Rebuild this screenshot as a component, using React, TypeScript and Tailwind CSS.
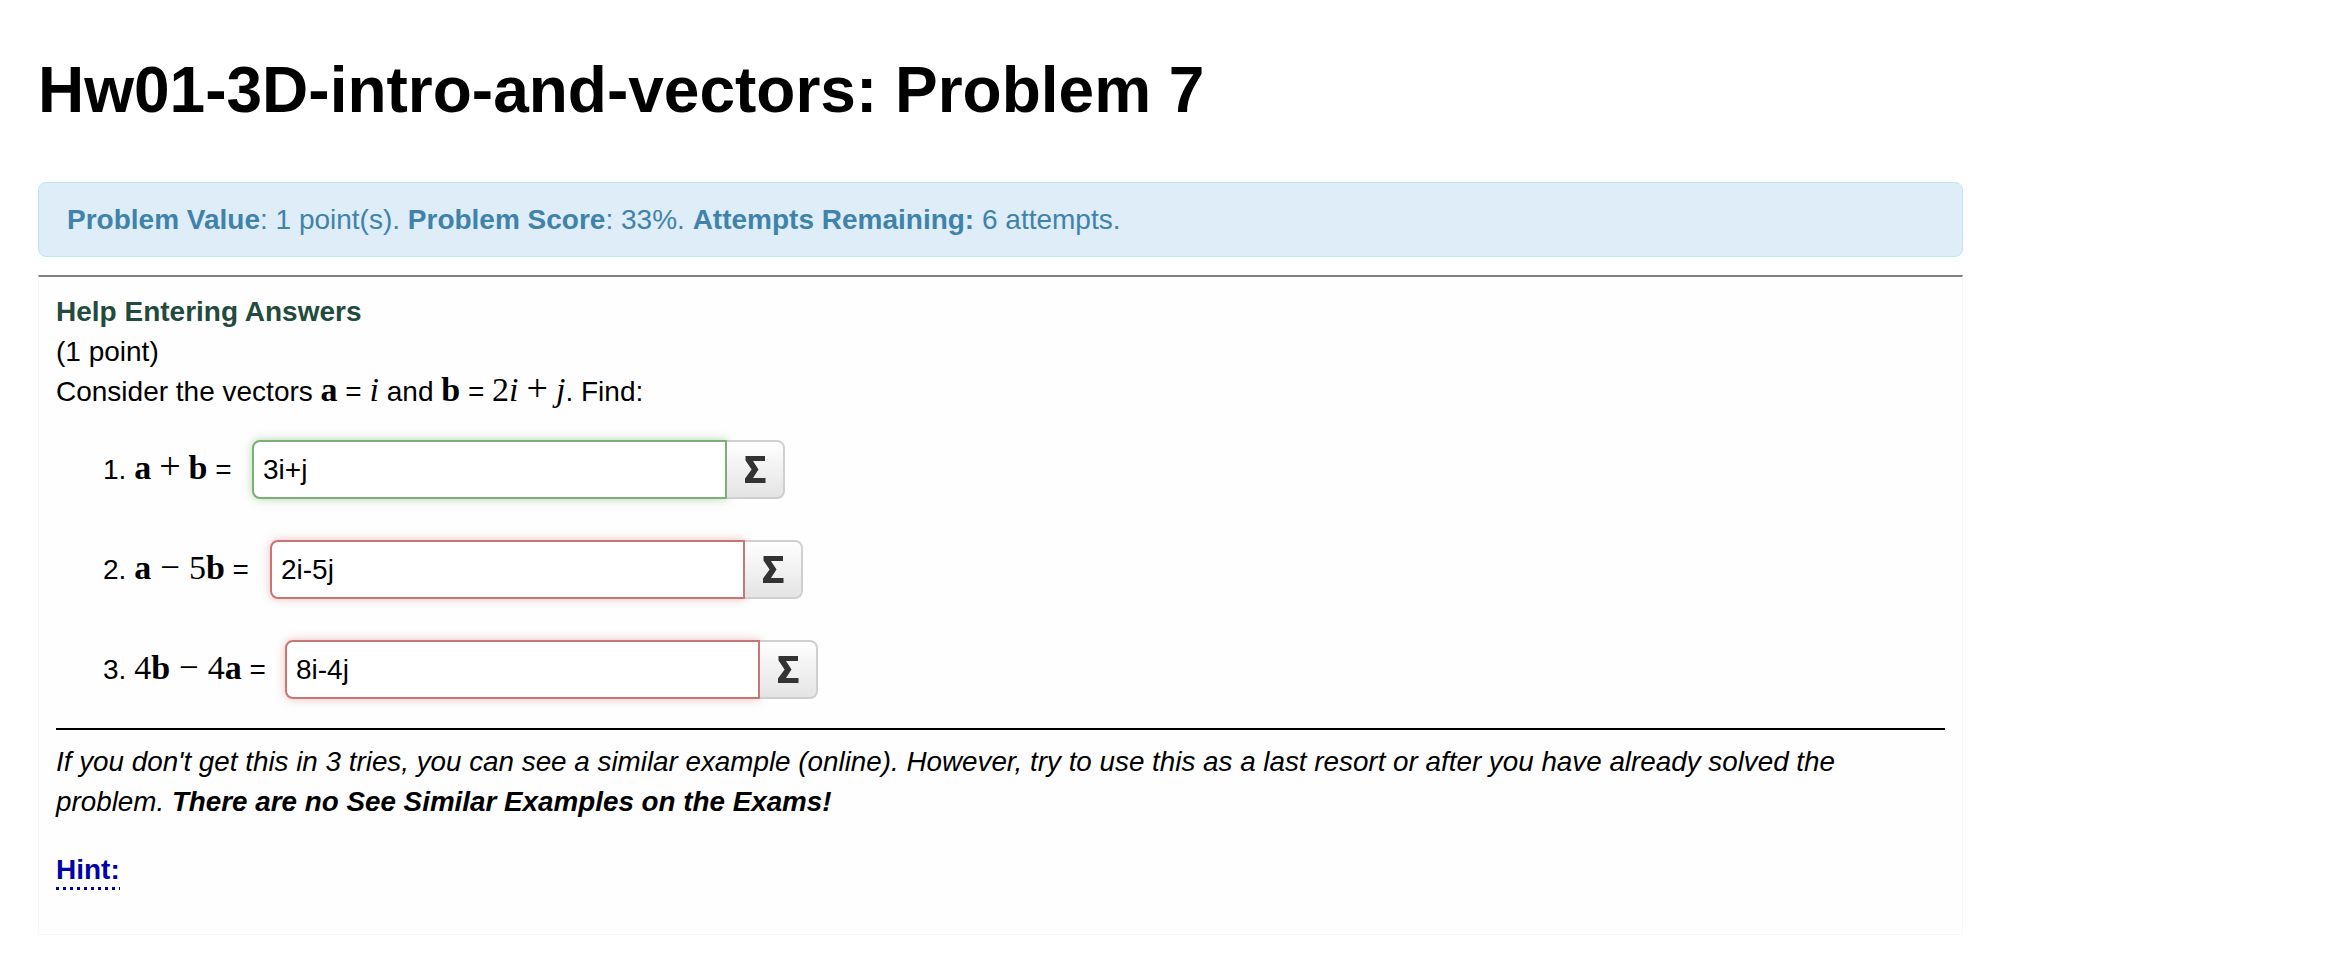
import React from "react";

const Sigma = () => (
  <svg width="21" height="27" viewBox="0 0 21 27" aria-hidden="true">
    <polygon
      points="0.5,0 20,0 20,5 8,5 13.5,13.5 8,22 20.5,22 20.5,27 0,27 0,22.6 6.6,13.5 0.5,4.4"
      fill="#333333"
    />
  </svg>
);

type RowProps = {
  num: string;
  labelWidth: string;
  math: React.ReactNode;
  value: string;
  ok: boolean;
};

const B = ({ children }: { children: React.ReactNode }) => (
  <span className="font-['Liberation_Serif',serif] font-bold text-[34px] leading-[20px]">{children}</span>
);
const N = ({ children }: { children: React.ReactNode }) => (
  <span className="font-['Liberation_Serif',serif] text-[34px] leading-[20px]">{children}</span>
);
const I = ({ children }: { children: React.ReactNode }) => (
  <span className="font-['Liberation_Serif',serif] italic text-[34px] leading-[20px]">{children}</span>
);
const Op = ({ children }: { children: React.ReactNode }) => (
  <span className="mx-[8px] font-['Liberation_Serif',serif] text-[38px] leading-[20px]">{children}</span>
);
const Minus = () => (
  <span className="mx-[9px] font-['Liberation_Serif',serif] text-[35px] leading-[20px]">−</span>
);

const Row = ({ num, labelWidth, math, value, ok }: RowProps) => (
  <div className="flex h-[59px] items-center">
    <div className={`${labelWidth} shrink-0 whitespace-nowrap text-[28px] leading-[40px]`}>
      {num} {math} =
    </div>
    <div className="flex h-[59px]">
      <div
        className={
          ok
            ? "flex h-[59px] w-[475px] items-center rounded-l-[8px] border-2 border-[#7cae76] bg-white pl-[9px] text-[28px] shadow-[0_0_10px_rgba(120,180,110,0.55)]"
            : "flex h-[59px] w-[475px] items-center rounded-l-[8px] border-2 border-[#c97575] bg-white pl-[9px] text-[28px] shadow-[0_0_10px_rgba(205,95,95,0.4)]"
        }
      >
        {value}
      </div>
      <div className="flex h-[59px] w-[58px] items-center justify-center rounded-r-[8px] border-2 border-l-0 border-[#cfcfcf] bg-gradient-to-b from-white to-[#e4e4e4]">
        <Sigma />
      </div>
    </div>
  </div>
);

export default function App() {
  return (
    <div className="min-h-screen bg-white font-['Liberation_Sans',Arial,sans-serif] text-black">
      <div className="ml-[38px] w-[1925px] pb-[38px]">
        <h1 className="pt-[55px] text-[64px] font-bold leading-[70px]">
          Hw01-3D-intro-and-vectors: Problem 7
        </h1>

        <div className="mt-[57px] flex h-[75px] items-center rounded-[8px] border border-[#bce8f1] bg-[#deedf7] pl-[28px] text-[28px] leading-[40px] text-[#3f83ab]">
          <span>
            <b>Problem Value</b>: 1 point(s). <b>Problem Score</b>: 33%. <b>Attempts Remaining:</b> 6 attempts.
          </span>
        </div>

        <div className="mt-[18px] border-x border-b border-t-2 border-x-[#f7f7f7] border-b-[#f7f7f7] border-t-[#808080] bg-[#fefefe] px-[17px] pb-[44px] pt-[15px]">
          <div className="text-[28px] leading-[40px]">
            <div className="font-bold text-[#234b3d]">Help Entering Answers</div>
            <div>(1 point)</div>
            <div className="whitespace-nowrap">
              Consider the vectors <B>a</B> = <I>i</I> and <B>b</B> ={" "}
              <N>2</N>
              <I>i</I>
              <Op>+</Op>
              <I>j</I>. Find:
            </div>
          </div>

          <div className="mt-[28px] flex flex-col gap-[41px] pl-[47px]">
            <Row
              num="1."
              labelWidth="w-[149px]"
              ok
              value="3i+j"
              math={
                <>
                  <B>a</B>
                  <Op>+</Op>
                  <B>b</B>
                </>
              }
            />
            <Row
              num="2."
              labelWidth="w-[167px]"
              ok={false}
              value="2i-5j"
              math={
                <>
                  <B>a</B>
                  <Minus />
                  <N>5</N>
                  <B>b</B>
                </>
              }
            />
            <Row
              num="3."
              labelWidth="w-[182px]"
              ok={false}
              value="8i-4j"
              math={
                <>
                  <N>4</N>
                  <B>b</B>
                  <Minus />
                  <N>4</N>
                  <B>a</B>
                </>
              }
            />
          </div>

          <div className="mt-[29px] h-[2px] bg-black" />

          <p className="mt-[12px] text-[27.8px] italic leading-[40px]">
            If you don&apos;t get this in 3 tries, you can see a similar example (online). However, try to use this as a last resort or after you have already solved the
            <br />
            problem. <b>There are no See Similar Examples on the Exams!</b>
          </p>

          <div className="mt-[32px]">
            <span className="inline-flex flex-col">
              <span className="text-[28px] font-bold leading-[32px] text-[#0000aa]">Hint:</span>
              <span className="mt-[1px] h-[3px] w-full bg-[repeating-linear-gradient(to_right,#0000aa_0px,#0000aa_3.5px,transparent_3.5px,transparent_7px)]" />
            </span>
          </div>
        </div>
      </div>
    </div>
  );
}
